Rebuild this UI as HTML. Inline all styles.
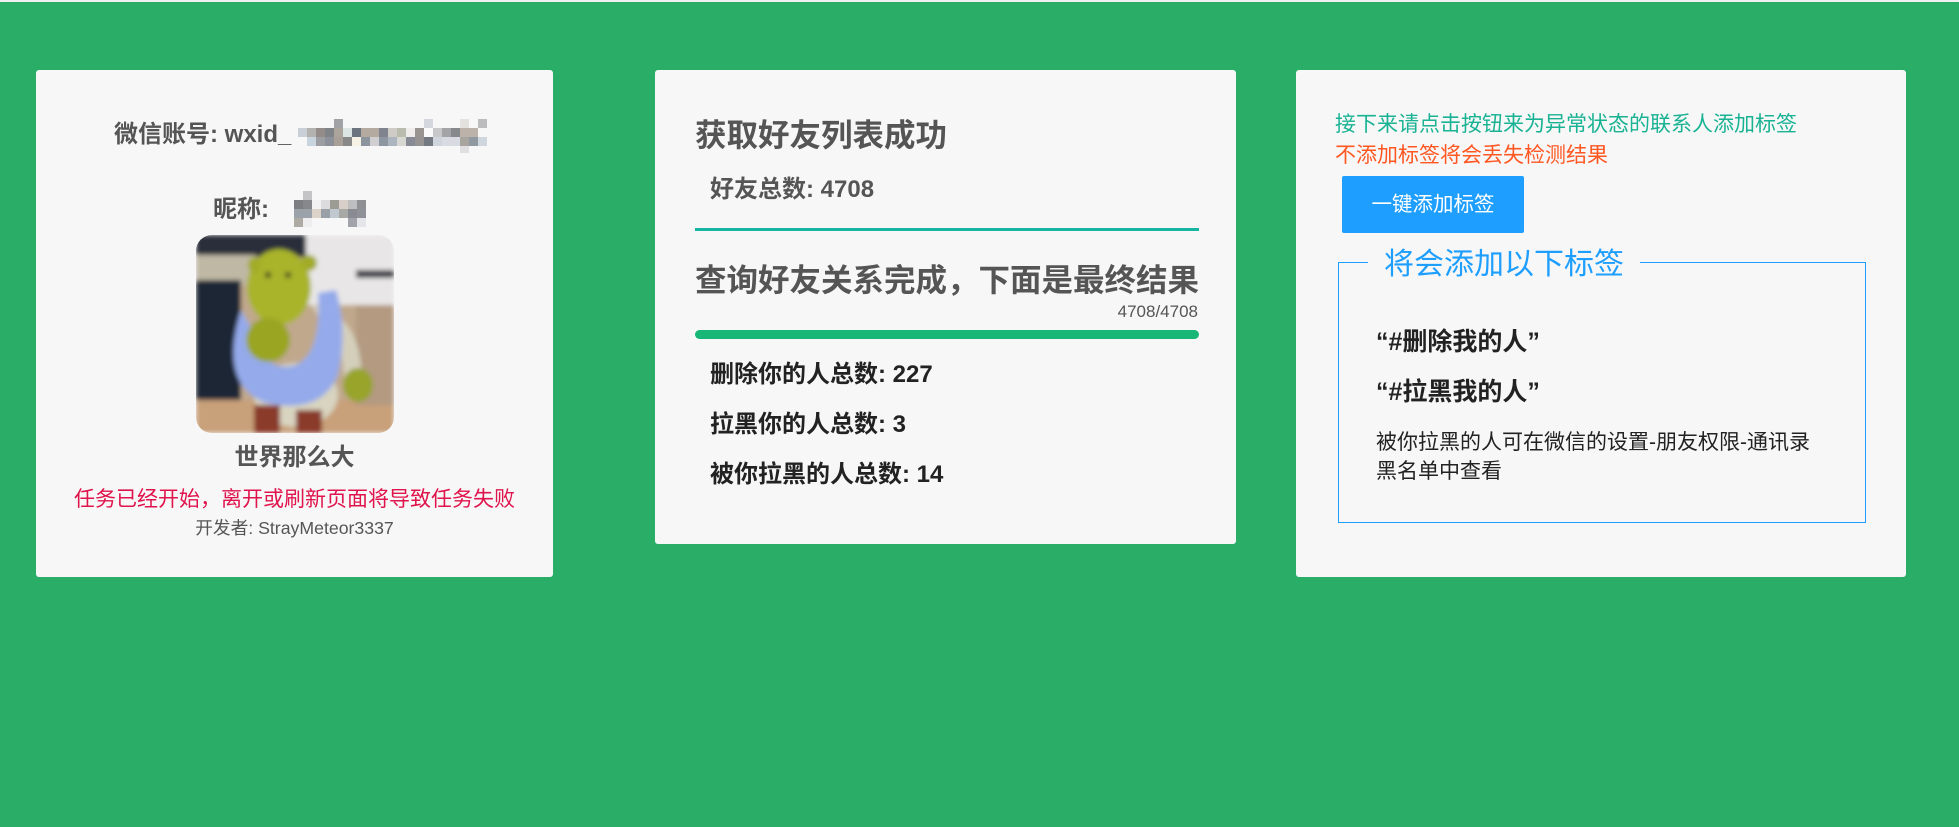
<!DOCTYPE html>
<html><head><meta charset="utf-8">
<style>
*{margin:0;padding:0;box-sizing:border-box}
html,body{width:1959px;height:827px;overflow:hidden}
body{background:#2aad67;font-family:"Liberation Sans","Noto Sans CJK SC",sans-serif;position:relative}
.top{position:absolute;left:0;top:0;width:1959px;height:2px;background:#f0f0f0}
.card{position:absolute;background:#f7f7f7;border-radius:3px}
.t{position:absolute;white-space:nowrap}
.c{text-align:center}
</style></head><body>
<div class="top"></div>

<!-- card 1 -->
<div class="card" style="left:36px;top:70px;width:517px;height:507px"></div>
<div class="t" style="left:114px;top:120px;height:30px;line-height:30px;font-size:24px;font-weight:bold;color:#555">微信账号: wxid_</div>
<svg style="position:absolute;left:298px;top:119px" width="190" height="46">
<g>
<rect x="36" y="0" width="9" height="9" fill="#a0a2a6"/><rect x="126" y="0" width="9" height="9" fill="#d4d8de"/><rect x="162" y="0" width="9" height="9" fill="#e4e2de"/><rect x="180" y="0" width="9" height="9" fill="#bcbcbe"/>
<rect x="0" y="9" width="9" height="9" fill="#c8cfd6"/><rect x="9" y="9" width="9" height="9" fill="#b4b2ae"/><rect x="18" y="9" width="9" height="9" fill="#948c88"/><rect x="27" y="9" width="9" height="9" fill="#808488"/><rect x="36" y="9" width="9" height="9" fill="#aaa49c"/><rect x="45" y="9" width="9" height="9" fill="#dde4e4"/><rect x="54" y="9" width="9" height="9" fill="#6c7480"/><rect x="63" y="9" width="18" height="9" fill="#b4aaa0"/><rect x="81" y="9" width="9" height="9" fill="#80848e"/><rect x="90" y="9" width="9" height="9" fill="#cfcbc6"/><rect x="99" y="9" width="9" height="9" fill="#babcae"/><rect x="108" y="9" width="9" height="9" fill="#eeedeb"/><rect x="117" y="9" width="9" height="9" fill="#9a9490"/><rect x="126" y="9" width="9" height="9" fill="#fafafa"/><rect x="135" y="9" width="9" height="9" fill="#c8c8ca"/><rect x="144" y="9" width="9" height="9" fill="#a4a4a6"/><rect x="153" y="9" width="9" height="9" fill="#86888c"/><rect x="162" y="9" width="18" height="9" fill="#bcb2aa"/>
<rect x="9" y="18" width="9" height="9" fill="#c8d4de"/><rect x="18" y="18" width="9" height="9" fill="#9c9ea2"/><rect x="27" y="18" width="9" height="9" fill="#8c9098"/><rect x="36" y="18" width="9" height="9" fill="#a8a098"/><rect x="45" y="18" width="9" height="9" fill="#888888"/><rect x="54" y="18" width="9" height="9" fill="#f6f2e6"/><rect x="63" y="18" width="9" height="9" fill="#8c949e"/><rect x="72" y="18" width="9" height="9" fill="#cfcfd2"/><rect x="81" y="18" width="9" height="9" fill="#8e96a2"/><rect x="90" y="18" width="9" height="9" fill="#acb4c0"/><rect x="99" y="18" width="9" height="9" fill="#d8d8d2"/><rect x="108" y="18" width="9" height="9" fill="#888a96"/><rect x="117" y="18" width="9" height="9" fill="#959492"/><rect x="126" y="18" width="9" height="9" fill="#747880"/><rect x="135" y="18" width="9" height="9" fill="#d0d4dc"/><rect x="144" y="18" width="18" height="9" fill="#d8dce2"/><rect x="162" y="18" width="9" height="9" fill="#a8a49e"/><rect x="171" y="18" width="9" height="9" fill="#9098a2"/><rect x="180" y="18" width="9" height="9" fill="#d0d6de"/>
<rect x="162" y="27" width="9" height="7" fill="#e0e0e2"/>
</g></svg>
<div class="t" style="left:213px;top:195px;height:30px;line-height:30px;font-size:24px;font-weight:bold;color:#555">昵称:</div>
<svg style="position:absolute;left:294px;top:191px" width="72" height="36">
<rect x="9" y="0" width="9" height="9" fill="#c4c4c6"/>
<rect x="0" y="9" width="9" height="9" fill="#7c7e82"/><rect x="9" y="9" width="9" height="9" fill="#86888c"/><rect x="18" y="9" width="9" height="9" fill="#f2f2f2"/><rect x="27" y="9" width="9" height="9" fill="#dcdcde"/><rect x="36" y="9" width="9" height="9" fill="#9c9c94"/><rect x="45" y="9" width="9" height="9" fill="#d8d0c8"/><rect x="54" y="9" width="9" height="9" fill="#bebec0"/><rect x="63" y="9" width="9" height="9" fill="#8e9094"/>
<rect x="0" y="18" width="18" height="9" fill="#9ca2aa"/><rect x="18" y="18" width="9" height="9" fill="#dcd4c8"/><rect x="27" y="18" width="9" height="9" fill="#9aa0a8"/><rect x="36" y="18" width="9" height="9" fill="#c0c8d0"/><rect x="45" y="18" width="9" height="9" fill="#a8a8a6"/><rect x="54" y="18" width="9" height="9" fill="#888c92"/><rect x="63" y="18" width="9" height="9" fill="#8e9298"/>
<rect x="0" y="27" width="9" height="9" fill="#b0aaa4"/><rect x="9" y="27" width="9" height="9" fill="#eeeeee"/><rect x="54" y="27" width="9" height="9" fill="#a0a4aa"/><rect x="63" y="27" width="9" height="9" fill="#e4e6ea"/>
</svg>

<svg style="position:absolute;left:196px;top:235px" width="198" height="198" viewBox="0 0 198 198">
<defs><clipPath id="r"><rect width="198" height="198" rx="16"/></clipPath>
<filter id="b"><feGaussianBlur stdDeviation="2.5"/></filter></defs>
<g clip-path="url(#r)" filter="url(#b)">
<rect width="198" height="198" fill="#c0a88c"/>
<rect x="0" y="0" width="198" height="22" fill="#2a2e3a"/>
<rect x="0" y="20" width="60" height="30" fill="#bfb8a4"/>
<rect x="0" y="45" width="45" height="125" fill="#1e2636"/>
<rect x="110" y="0" width="88" height="70" fill="#e8e6e6"/>
<rect x="160" y="35" width="38" height="8" fill="#3c4046"/>
<rect x="0" y="165" width="198" height="33" fill="#c8a07a"/>
<rect x="160" y="70" width="38" height="100" fill="#b39a80"/>
<ellipse cx="100" cy="160" rx="42" ry="32" fill="#d8d4c0"/>
<path d="M115 70 Q160 78 165 130 L168 150 L150 155 L145 115 Z" fill="#d4cfbb"/>
<ellipse cx="162" cy="150" rx="15" ry="17" fill="#98a42a"/>
<path d="M45 75 Q22 150 70 168 Q125 180 142 140 Q152 95 140 55 L122 58 Q126 118 100 130 Q70 138 62 105 Z" fill="#94aaea"/>
<ellipse cx="83" cy="52" rx="32" ry="38" fill="#a9b42a"/>
<ellipse cx="58" cy="30" rx="6" ry="8" fill="#a2ac26"/>
<ellipse cx="113" cy="28" rx="8" ry="8" fill="#a2ac26"/>
<ellipse cx="72" cy="105" rx="22" ry="22" fill="#9aa524"/>
<circle cx="72" cy="40" r="3" fill="#3a3a20"/><circle cx="92" cy="40" r="3" fill="#3a3a20"/>
<rect x="58" y="170" width="26" height="28" fill="#8a3a2a"/>
<rect x="100" y="175" width="26" height="23" fill="#8a3a2a"/>
</g></svg>

<div class="t c" style="left:36px;width:517px;top:443px;height:30px;line-height:30px;font-size:24px;font-weight:bold;color:#555">世界那么大</div>
<div class="t c" style="left:36px;width:517px;top:487px;height:26px;line-height:26px;font-size:21px;color:#e0144c">任务已经开始，离开或刷新页面将导致任务失败</div>
<div class="t c" style="left:36px;width:517px;top:517px;height:22px;line-height:22px;font-size:17.7px;color:#555">开发者: StrayMeteor3337</div>

<!-- card 2 -->
<div class="card" style="left:655px;top:70px;width:581px;height:474px"></div>
<div class="t" style="left:695px;top:115px;height:40px;line-height:40px;font-size:31.5px;font-weight:bold;color:#555">获取好友列表成功</div>
<div class="t" style="left:710px;top:175px;height:30px;line-height:30px;font-size:24px;font-weight:bold;color:#555">好友总数: 4708</div>
<div style="position:absolute;left:695px;top:228px;width:504px;height:3px;background:#16b4a2"></div>
<div class="t" style="left:695px;top:260px;height:40px;line-height:40px;font-size:31.5px;font-weight:bold;color:#555">查询好友关系完成，下面是最终结果</div>
<div class="t" style="left:1000px;width:198px;text-align:right;top:301px;height:22px;line-height:22px;font-size:17px;color:#555">4708/4708</div>
<div style="position:absolute;left:695px;top:330px;width:504px;height:9px;border-radius:5px;background:#18b677"></div>
<div class="t" style="left:710px;top:360px;height:30px;line-height:30px;font-size:24px;font-weight:bold;color:#222">删除你的人总数: 227</div>
<div class="t" style="left:710px;top:410px;height:30px;line-height:30px;font-size:24px;font-weight:bold;color:#222">拉黑你的人总数: 3</div>
<div class="t" style="left:710px;top:460px;height:30px;line-height:30px;font-size:24px;font-weight:bold;color:#222">被你拉黑的人总数: 14</div>

<!-- card 3 -->
<div class="card" style="left:1296px;top:70px;width:610px;height:507px"></div>
<div class="t" style="left:1335px;top:111px;height:28px;line-height:28px;font-size:21px;color:#19b394">接下来请点击按钮来为异常状态的联系人添加标签</div>
<div class="t" style="left:1335px;top:142px;height:28px;line-height:28px;font-size:21px;color:#ff5722">不添加标签将会丢失检测结果</div>
<div style="position:absolute;left:1342px;top:176px;width:182px;height:57px;background:#1e9fff;border-radius:2px;color:#fff;font-size:20.5px;line-height:57px;text-align:center">一键添加标签</div>
<div style="position:absolute;left:1338px;top:262px;width:528px;height:261px;border:1px solid #1e9fff"></div>
<div class="t" style="left:1368px;top:246px;height:38px;line-height:38px;padding:0 16px;background:#f7f7f7;font-size:30px;color:#1e9fff">将会添加以下标签</div>
<div class="t" style="left:1376px;top:327px;height:30px;line-height:30px;font-size:25px;font-weight:bold;color:#222">“#删除我的人”</div>
<div class="t" style="left:1376px;top:377px;height:30px;line-height:30px;font-size:25px;font-weight:bold;color:#222">“#拉黑我的人”</div>
<div class="t" style="left:1376px;top:428px;height:30px;line-height:30px;font-size:21px;color:#222">被你拉黑的人可在微信的设置-朋友权限-通讯录</div>
<div class="t" style="left:1376px;top:457px;height:30px;line-height:30px;font-size:21px;color:#222">黑名单中查看</div>
</body></html>
